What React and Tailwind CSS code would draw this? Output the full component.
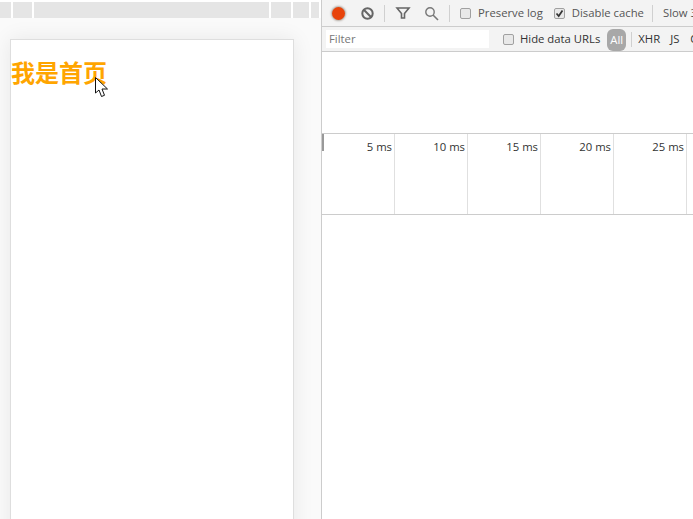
import React from "react";

const uiFont = "font-['Open_Sans','Noto_Sans',sans-serif]";

const Check = ({ checked }) => (
  <span className="flex h-[11px] w-[11px] shrink-0 items-center justify-center rounded-[2px] border border-[#a0a0a0] bg-[#e8e8e8]">
    {checked && (
      <svg width="9" height="9" viewBox="0 0 9 9">
        <path d="M1.5 4.5 L3.7 7 L7.5 1.5" fill="none" stroke="#333" strokeWidth="1.7" />
      </svg>
    )}
  </span>
);

const Divider = () => <span className="block h-[17px] w-px shrink-0 bg-[#d0d0d0]" />;

const Cursor = () => (
  <svg className="absolute left-[95px] top-[77px]" width="14" height="21" viewBox="0 0 14 21">
    <path
      d="M0.5 0.5 L0.5 16 L4 13 L6.5 19.5 L9.5 18.3 L7 12 L12.5 12 Z"
      fill="#fff"
      stroke="#111"
      strokeWidth="1"
    />
  </svg>
);

const ticks = ["5 ms", "10 ms", "15 ms", "20 ms", "25 ms"];

export default function App() {
  return (
    <div className={`relative flex h-[519px] w-[693px] overflow-hidden bg-white ${uiFont}`}>
      {/* page preview */}
      <div className="flex h-full w-[321px] shrink-0 flex-col overflow-hidden bg-[#fafafa]">
        <div className="z-10 flex h-[18px] w-[321px] shrink-0 items-end gap-[2px] bg-white pt-[2px]">
          <div className="h-full w-[11px] bg-[#e5e5e5]" />
          <div className="h-full w-[19px] bg-[#e5e5e5]" />
          <div className="h-full w-[235px] bg-[#e5e5e5]" />
          <div className="h-full w-[20px] bg-[#e5e5e5]" />
          <div className="h-full w-[16px] bg-[#e5e5e5]" />
          <div className="h-full w-[8px] bg-[#e5e5e5]" />
        </div>
        <div className="min-h-0 flex-1 pl-[10px] pt-[21px]">
          <div className="h-[600px] w-[284px] border border-[#dedede] bg-white pt-[14px] shadow-[0_0_20px_rgba(0,0,0,0.08)]">
            <h1 className="font-['Noto_Sans_CJK_SC',sans-serif] text-[24px] leading-[36px] font-bold text-[#ffa500]">
              我是首页
            </h1>
          </div>
        </div>
      </div>

      {/* devtools */}
      <div className="flex h-full min-w-0 flex-1 flex-col border-l border-[#cccccc] text-[11.3px] text-[#333]">
        <div className="flex h-[27px] shrink-0 items-center overflow-hidden whitespace-nowrap border-b border-[#cccccc] bg-[#f3f3f3] pl-[10px]">
          <span className="h-[13px] w-[13px] shrink-0 rounded-full bg-[#e8430a] shadow-[0_0_2px_1px_#b0a8a0]" />
          <svg className="ml-[15px] shrink-0" width="15" height="15" viewBox="0 0 15 15">
            <circle cx="7.5" cy="7.5" r="5.2" fill="none" stroke="#666" strokeWidth="2" />
            <path d="M3.8 3.8 L11.2 11.2" stroke="#666" strokeWidth="2" />
          </svg>
          <span className="ml-[9px] shrink-0"><Divider /></span>
          <svg className="ml-[10px] shrink-0" width="16" height="14" viewBox="0 0 16 14">
            <path d="M2 2 H14 L9.5 7.5 V12 H6.5 V7.5 Z" fill="none" stroke="#666" strokeWidth="1.6" />
          </svg>
          <svg className="ml-[13px] shrink-0" width="15" height="15" viewBox="0 0 15 15">
            <circle cx="6" cy="6" r="4.2" fill="none" stroke="#777" strokeWidth="1.4" />
            <path d="M9 9 L14 14" stroke="#777" strokeWidth="1.6" />
          </svg>
          <span className="ml-[10px] shrink-0"><Divider /></span>
          <span className="ml-[10px] shrink-0"><Check /></span>
          <span className="ml-[7px] mt-[1px] shrink-0 text-[#555]">Preserve log</span>
          <span className="ml-[11px] shrink-0"><Check checked /></span>
          <span className="ml-[7px] mt-[1px] shrink-0 text-[#555]">Disable cache</span>
          <span className="ml-[8px] shrink-0"><Divider /></span>
          <span className="ml-[10px] mt-[1px] shrink-0 text-[#555]">Slow 3G</span>
        </div>

        <div className="flex h-[25px] shrink-0 items-center overflow-hidden whitespace-nowrap border-b border-[#cccccc] bg-[#f3f3f3] pl-[4px]">
          <div className="flex h-[18px] w-[163px] shrink-0 items-center bg-white pl-[3px] text-[#777]">Filter</div>
          <span className="ml-[14px] shrink-0"><Check /></span>
          <span className="ml-[6px] shrink-0 text-[#333]">Hide data URLs</span>
          <span className="ml-[7px] mt-[2px] flex h-[22px] w-[19px] shrink-0 items-center justify-center rounded-[6px] bg-[#a8a8a8] text-white">
            All
          </span>
          <span className="ml-[5px] h-[15px] w-px shrink-0 bg-[#d0d0d0]" />
          <span className="ml-[6px] shrink-0">XHR</span>
          <span className="ml-[10px] shrink-0">JS</span>
          <span className="ml-[11px] shrink-0">CSS</span>
        </div>

        <div className="h-[82px] shrink-0 border-b border-[#cccccc]" />

        <div className="relative flex h-[81px] shrink-0 border-b border-[#cccccc]">
          <span className="absolute left-0 top-0 h-[17px] w-[2px] bg-[#999]" />
          {ticks.map((t) => (
            <div
              key={t}
              className="h-full w-[73px] shrink-0 border-r border-[#e0e0e0] pr-[2px] pt-[5px] text-right leading-[16px] text-[#333]"
            >
              {t}
            </div>
          ))}
        </div>
      </div>

      <Cursor />
    </div>
  );
}
